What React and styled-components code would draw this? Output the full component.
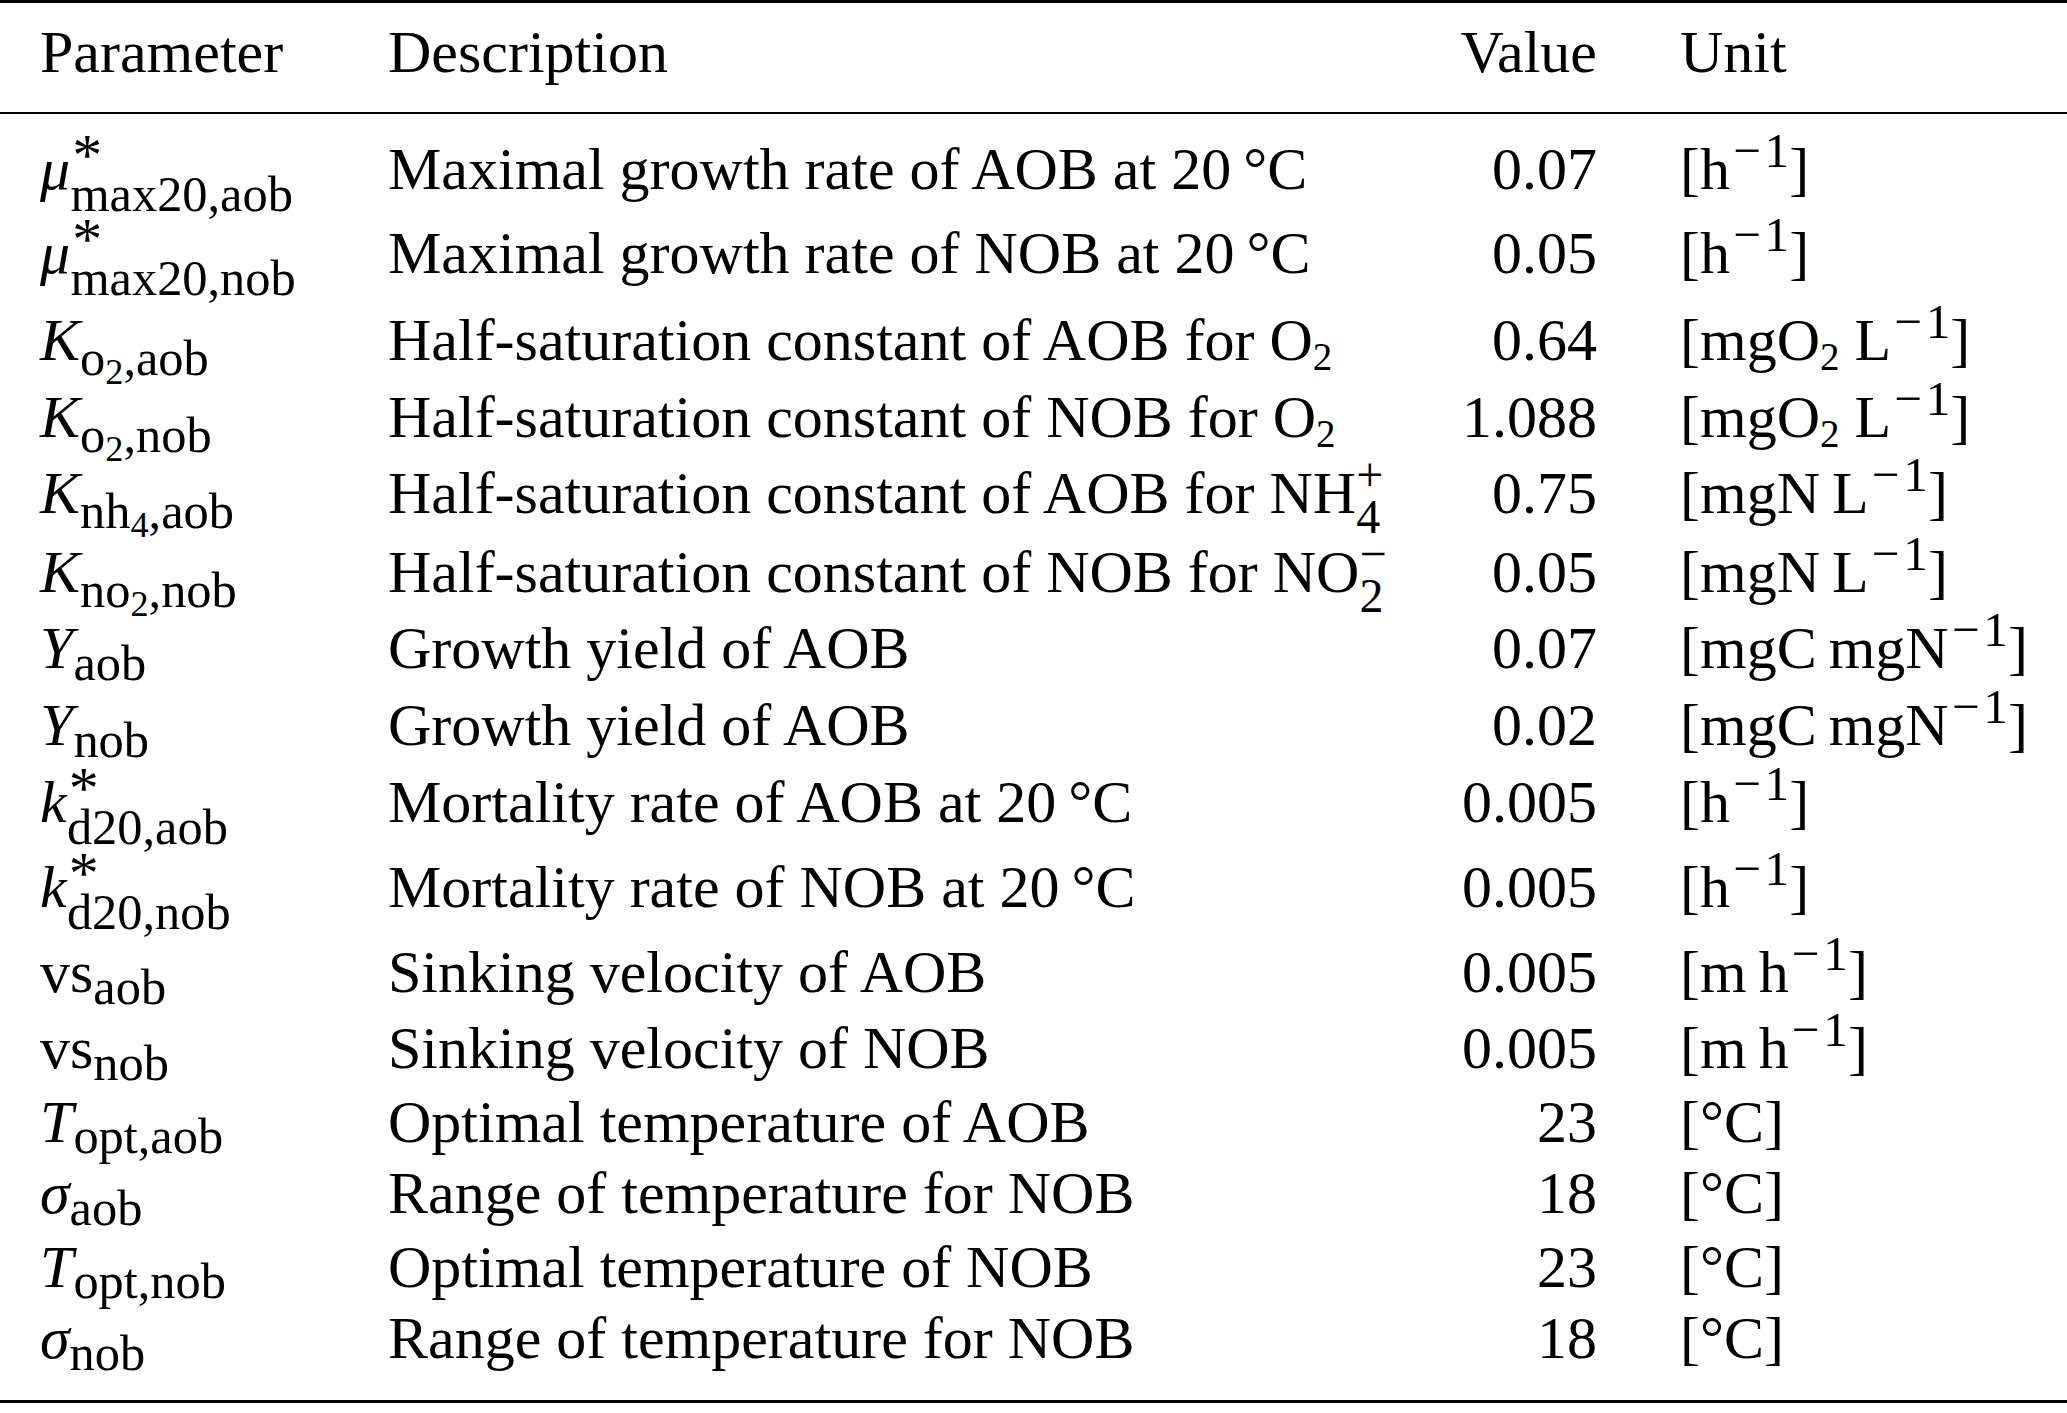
import React from 'react';
import styled, { createGlobalStyle } from 'styled-components';

const Global = createGlobalStyle`
  html, body { margin: 0; padding: 0; background: #fff; }
  body { font-family: "Liberation Serif", "Times New Roman", serif; color: #000; }
`;

const Table = styled.div`
  width: 2067px;
  height: 1413px;
  display: flex;
  flex-direction: column;
  background: #fff;
`;

const Rule = styled.div`
  flex: none;
  height: ${(p) => p.$h}px;
  background: #000;
`;

const Head = styled.div`
  padding: 14px 0 25px;
`;

const Body = styled.div`
  padding-bottom: 27px;
`;

const Row = styled.div`
  display: grid;
  grid-template-columns: 348px 1012px 197px 1fr;
  padding-left: 40px;
  padding-top: ${(p) => p.$pad || 0}px;
  font-size: 60px;
  line-height: 70px;
  white-space: nowrap;
`;

const Cell = styled.div``;

const ValueCell = styled.div`
  text-align: right;
`;

const UnitCell = styled.div`
  padding-left: 83px;
`;

const Sym = styled.span`
  font-style: italic;
`;

const Sub = styled.span`
  font-size: ${(p) => p.$size || 0.84}em;
  vertical-align: ${(p) => -(p.$drop || 12)}px;
  line-height: 0;
  margin-left: ${(p) => (p.$back ? `-${p.$back}em` : '0')};
`;

const Sup = styled.span`
  font-size: ${(p) => p.$size || 0.82}em;
  vertical-align: ${(p) => p.$raise || 22}px;
  line-height: 0;
`;

const Star = styled.span`
  font-size: 1em;
  vertical-align: 14px;
  line-height: 0;
  margin-left: 2px;
`;

const Minus = styled.span`
  padding: 0 0.07em;
`;

const TH = '\u2009';

const inv = (
  <Sup>
    <Minus>−</Minus>1
  </Sup>
);

const unitH = <>[h{inv}]</>;
const unitO2 = (
  <>
    [mgO<Sub $size={0.65} $drop={10}>2</Sub> L{inv}]
  </>
);
const unitN = <>[mgN{TH}L{inv}]</>;
const unitCN = <>[mgC{TH}mgN{inv}]</>;
const unitMH = <>[m{TH}h{inv}]</>;
const unitC = <>[°C]</>;

const O2 = (
  <>
    O<Sub $size={0.65} $drop={10}>2</Sub>
  </>
);

const starred = (sym, sub) => (
  <>
    <Sym>{sym}</Sym>
    <Star>*</Star>
    <Sub $drop={22} $back={0.63}>{sub}</Sub>
  </>
);

const kSub = (a, n, b) => (
  <>
    <Sym>K</Sym>
    <Sub $drop={15}>
      {a}
      <Sub $size={0.72} $drop={9}>{n}</Sub>,{b}
    </Sub>
  </>
);

const rows = [
  { pad: 20, param: starred('μ', 'max20,aob'), desc: <>Maximal growth rate of AOB at 20{TH}°C</>, value: '0.07', unit: unitH },
  { pad: 14, param: starred('μ', 'max20,nob'), desc: <>Maximal growth rate of NOB at 20{TH}°C</>, value: '0.05', unit: unitH },
  { pad: 17, param: kSub('o', '2', 'aob'), desc: <>Half-saturation constant of AOB for {O2}</>, value: '0.64', unit: unitO2 },
  { pad: 7, param: kSub('o', '2', 'nob'), desc: <>Half-saturation constant of NOB for {O2}</>, value: '1.088', unit: unitO2 },
  {
    pad: 6,
    param: kSub('nh', '4', 'aob'),
    desc: (
      <>
        Half-saturation constant of AOB for NH
        <Sup $size={0.8} $raise={22}>+</Sup>
        <Sub $size={0.8} $drop={20} $back={0.564}>4</Sub>
      </>
    ),
    value: '0.75',
    unit: unitN,
  },
  {
    pad: 9,
    param: kSub('no', '2', 'nob'),
    desc: (
      <>
        Half-saturation constant of NOB for NO
        <Sup $size={0.8} $raise={22}>−</Sup>
        <Sub $size={0.8} $drop={20} $back={0.564}>2</Sub>
      </>
    ),
    value: '0.05',
    unit: unitN,
  },
  { pad: 6, param: <><Sym>Y</Sym><Sub>aob</Sub></>, desc: 'Growth yield of AOB', value: '0.07', unit: unitCN },
  { pad: 7, param: <><Sym>Y</Sym><Sub>nob</Sub></>, desc: 'Growth yield of AOB', value: '0.02', unit: unitCN },
  { pad: 7, param: starred('k', 'd20,aob'), desc: <>Mortality rate of AOB at 20{TH}°C</>, value: '0.005', unit: unitH },
  { pad: 15, param: starred('k', 'd20,nob'), desc: <>Mortality rate of NOB at 20{TH}°C</>, value: '0.005', unit: unitH },
  { pad: 15, param: <>vs<Sub>aob</Sub></>, desc: 'Sinking velocity of AOB', value: '0.005', unit: unitMH },
  { pad: 6, param: <>vs<Sub>nob</Sub></>, desc: 'Sinking velocity of NOB', value: '0.005', unit: unitMH },
  { pad: 4, param: <><Sym>T</Sym><Sub $drop={11}>opt,aob</Sub></>, desc: 'Optimal temperature of AOB', value: '23', unit: unitC },
  { pad: 1, param: <><Sym>σ</Sym><Sub>aob</Sub></>, desc: 'Range of temperature for NOB', value: '18', unit: unitC },
  { pad: 4, param: <><Sym>T</Sym><Sub $drop={11}>opt,nob</Sub></>, desc: 'Optimal temperature of NOB', value: '23', unit: unitC },
  { pad: 1, param: <><Sym>σ</Sym><Sub>nob</Sub></>, desc: 'Range of temperature for NOB', value: '18', unit: unitC },
];

export default function App() {
  return (
    <>
      <Global />
      <Table>
        <Rule $h={3} />
        <Head>
          <Row>
            <Cell>Parameter</Cell>
            <Cell>Description</Cell>
            <ValueCell>Value</ValueCell>
            <UnitCell>Unit</UnitCell>
          </Row>
        </Head>
        <Rule $h={2} />
        <Body>
          {rows.map((r, i) => (
            <Row key={i} $pad={r.pad}>
              <Cell>{r.param}</Cell>
              <Cell>{r.desc}</Cell>
              <ValueCell>{r.value}</ValueCell>
              <UnitCell>{r.unit}</UnitCell>
            </Row>
          ))}
        </Body>
        <Rule $h={3} />
      </Table>
    </>
  );
}
